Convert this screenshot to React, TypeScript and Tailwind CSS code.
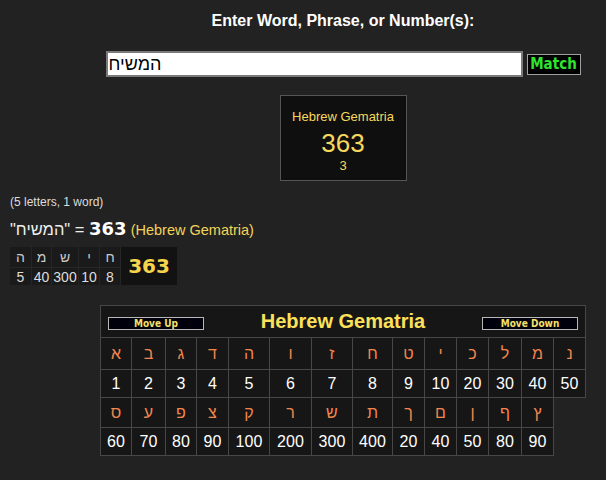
const firstRow: [string, number][] = [
  ['א', 1], ['ב', 2], ['ג', 3], ['ד', 4], ['ה', 5], ['ו', 6], ['ז', 7],
  ['ח', 8], ['ט', 9], ['י', 10], ['כ', 20], ['ל', 30], ['מ', 40], ['נ', 50],
]

const secondRow: [string, number][] = [
  ['ס', 60], ['ע', 70], ['פ', 80], ['צ', 90], ['ק', 100], ['ר', 200], ['ש', 300],
  ['ת', 400], ['ך', 20], ['ם', 40], ['ן', 50], ['ף', 80], ['ץ', 90],
]

const colWidths = [
  'w-[31px]', 'w-[34px]', 'w-[31px]', 'w-[32px]', 'w-[41px]', 'w-[42px]', 'w-[41px]',
  'w-[40px]', 'w-[32px]', 'w-[32px]', 'w-[32px]', 'w-[33px]', 'w-[32px]', 'w-[32px]',
]

const breakdown: { letter: string; value: number; w: string }[] = [
  { letter: 'ה', value: 5, w: 'w-[21px]' },
  { letter: 'מ', value: 40, w: 'w-[19px]' },
  { letter: 'ש', value: 300, w: 'w-[26px]' },
  { letter: 'י', value: 10, w: 'w-[20px]' },
  { letter: 'ח', value: 8, w: 'w-[20px]' },
]

const arial = "font-['Liberation_Sans',Arial,'DejaVu_Sans',sans-serif]"
const condensed = "font-['DejaVu_Sans_Condensed','DejaVu_Sans',sans-serif] [font-stretch:condensed]"

const SmallButton = ({ label }: { label: string }) => (
  <button
    className={`${condensed} w-[96px] h-[13px] border border-[#b8b8b8] bg-[#00000c] text-[#f4e06a] text-[10px] leading-[11px] font-bold`}
  >
    {label}
  </button>
)

const LetterRow = ({ items, height }: { items: [string, number][]; height: string }) => (
  <tr className={height}>
    {items.map(([letter]) => (
      <td
        key={letter}
        className="border border-[#474747] bg-[#161616] text-center text-[16px] text-[#f2864e] p-0"
      >
        {letter}
      </td>
    ))}
  </tr>
)

const NumberRow = ({ items, height }: { items: [string, number][]; height: string }) => (
  <tr className={height}>
    {items.map(([letter, value]) => (
      <td
        key={letter}
        className="border border-[#474747] bg-[#161616] text-center text-[16px] text-white p-0"
      >
        {value}
      </td>
    ))}
  </tr>
)

export default function App() {
  return (
    <div className={`${arial} min-h-screen w-full bg-[#222222] text-white pt-[12px]`}>
      <div className="pl-[80px] flex flex-col items-center">
        <div className="text-[16px] leading-[18px] font-bold">
          Enter Word, Phrase, or Number(s):
        </div>

        <div className="flex items-center gap-[4px] mt-[21px]">
          <input
            readOnly
            value="המשיח"
            className="w-[417px] h-[26px] border-2 border-[#7a7a7a] bg-white text-black text-[18px] px-[1px] outline-none"
          />
          <button
            className={`${condensed} w-[54px] h-[21px] border border-[#a0a0a0] bg-black text-[#2ee62e] text-[15px] leading-[17px] font-bold`}
          >
            Match
          </button>
        </div>

        <div className="mt-[18px] w-[127px] h-[86px] border border-[#555555] bg-[#0f0f0f] flex flex-col items-center pt-[13px] text-[#f6d85e]">
          <div className="text-[13px] leading-[15px]">Hebrew Gematria</div>
          <div className="text-[26px] leading-[30px] mt-[4px]">363</div>
          <div className="text-[13px] leading-[15px]">3</div>
        </div>
      </div>

      <div className="pl-[10px] mt-[14px]">
        <div className="text-[12px] leading-[14px] text-[#dddddd]">(5 letters, 1 word)</div>

        <div className="mt-[8px] flex items-baseline leading-[24px] whitespace-pre">
          <span className="text-[16.5px] text-[#eeeeee]">"המשיח" = </span>
          <span className="font-['DejaVu_Sans',sans-serif] font-bold text-[18px] text-white">363</span>
          <span className="text-[14.5px] text-[#f2d45a]"> (Hebrew Gematria)</span>
        </div>

        <div className="mt-[5px] inline-flex gap-px bg-[#262626]">
          {breakdown.map((b) => (
            <div key={b.letter} className={`${b.w} flex flex-col gap-px`}>
              <div className="h-[20px] bg-[#1a1a1a] flex items-center justify-center text-[14px] text-[#c8c8c8]">
                {b.letter}
              </div>
              <div className="h-[17px] bg-[#1a1a1a] flex items-center justify-center text-[14px] leading-[16px] text-[#dddddd]">
                {b.value}
              </div>
            </div>
          ))}
          <div className="w-[56px] bg-[#121212] flex items-center justify-center font-['DejaVu_Sans',sans-serif] font-bold text-[20px] text-[#f6d44c]">
            363
          </div>
        </div>
      </div>

      <div className="pl-[80px] flex justify-center mt-[20px] pb-[25px]">
        <table className="table-fixed w-[486px] border-collapse">
          <colgroup>
            {colWidths.map((w, i) => (
              <col key={i} className={w} />
            ))}
          </colgroup>
          <tbody>
            <tr className="h-[32px]">
              <td colSpan={14} className="border border-[#474747] bg-[#161616] p-0 align-top">
                <div className="grid grid-cols-[1fr_auto_1fr] items-center px-[7px] h-[31px]">
                  <div className="self-start mt-[4px] justify-self-start">
                    <SmallButton label="Move Up" />
                  </div>
                  <div className="text-[20px] leading-[23px] font-bold text-[#fbe15a]">
                    Hebrew Gematria
                  </div>
                  <div className="self-start mt-[4px] justify-self-end">
                    <SmallButton label="Move Down" />
                  </div>
                </div>
              </td>
            </tr>
            <LetterRow items={firstRow} height="h-[32px]" />
            <NumberRow items={firstRow} height="h-[28px]" />
            <LetterRow items={secondRow} height="h-[30px]" />
            <NumberRow items={secondRow} height="h-[28px]" />
          </tbody>
        </table>
      </div>
    </div>
  )
}
